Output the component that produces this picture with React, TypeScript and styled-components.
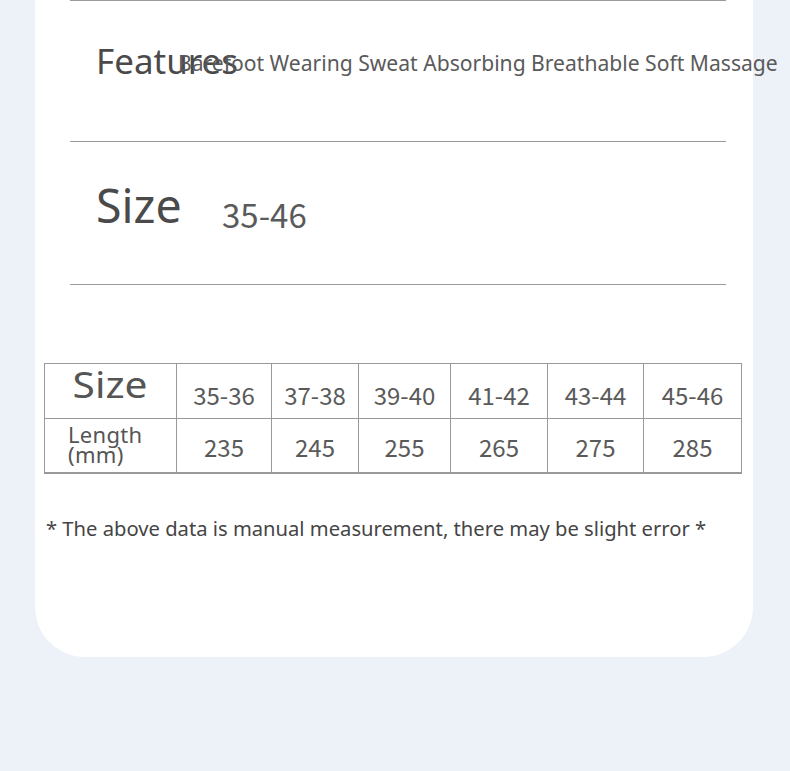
import React from "react";
import styled, { createGlobalStyle } from "styled-components";

const GlobalStyle = createGlobalStyle`
  html, body {
    margin: 0;
    padding: 0;
    background: #edf1f8;
  }
`;

const Page = styled.div`
  width: 790px;
  height: 771px;
  background: #edf1f8;
  overflow: hidden;
`;

const Card = styled.div`
  margin-left: 35px;
  width: 718px;
  height: 657px;
  background: #fff;
  border-radius: 0 0 50px 50px;
  padding: 0 0 0 35px;
  box-sizing: border-box;
  font-family: "Noto Sans", "Open Sans", sans-serif;
  color: #555;
`;

const Specs = styled.div`
  display: flex;
  flex-direction: column;
`;

const SpecRow = styled.div<{ $height: number }>`
  width: 656px;
  height: ${(p) => p.$height}px;
  border-top: 1px solid #9a9a9a;
  display: flex;
  align-items: flex-start;
  padding: 0 0 0 26px;
  box-sizing: border-box;
  &:last-of-type {
    height: ${(p) => p.$height + 1}px;
    border-bottom: 1px solid #9a9a9a;
  }
`;

const SpecLabel = styled.div<{ $width: number; $size: number; $top: number }>`
  flex: 0 0 ${(p) => p.$width}px;
  width: ${(p) => p.$width}px;
  min-width: 0;
  margin-top: ${(p) => p.$top}px;
  font-size: ${(p) => p.$size}px;
  color: #4a4a4a;
  white-space: nowrap;
  line-height: 1;
`;

const SpecValue = styled.div<{ $size: number; $top: number; $num?: boolean }>`
  margin-top: ${(p) => p.$top}px;
  font-size: ${(p) => p.$size}px;
  white-space: nowrap;
  color: #5a5a5a;
  line-height: 1;
  font-family: ${(p) =>
    p.$num ? '"Noto Sans CJK SC", sans-serif' : '"Noto Sans", sans-serif'};
`;

const SizeTable = styled.table`
  margin: 78px 0 0 -26px;
  border-collapse: collapse;
  border: 1.5px solid #999;
  border-bottom-width: 2.5px;
  font-family: "Noto Sans CJK SC", "Noto Sans", sans-serif;
  color: #5a5a5a;
`;

const Cell = styled.td<{ $w: number }>`
  width: ${(p) => p.$w}px;
  border: 1.5px solid #999;
  padding: 0;
  text-align: center;
  box-sizing: border-box;
`;

const HeadRow = styled.tr`
  height: 55px;
  td {
    font-size: 24px;
    padding-top: 6px;
  }
`;

const BodyRow = styled.tr`
  height: 54px;
  td {
    font-size: 24px;
    padding-top: 2px;
  }
`;

const LabelCell = styled(Cell)`
  && {
    vertical-align: top;
    padding-top: 3px;
  }
`;

const HeadLabel = styled.div`
  font-family: "Noto Sans", sans-serif;
  font-size: 36px;
  line-height: 36px;
  color: #555;
  transform: scaleX(1.13);
  margin-left: -1px;
`;

const LengthLabel = styled.div`
  font-family: "Noto Sans", sans-serif;
  font-size: 22px;
  line-height: 20px;
  text-align: left;
  padding: 2px 0 0 23px;
  color: #555;
  letter-spacing: 0.3px;
`;

const Note = styled.p`
  margin: 40px 0 0 -24px;
  font-size: 20.2px;
  color: #454545;
  white-space: nowrap;
`;

const widths = [132, 95, 87, 92, 97, 96, 98];
const sizes = ["35-36", "37-38", "39-40", "41-42", "43-44", "45-46"];
const lengths = ["235", "245", "255", "265", "275", "285"];

export default function App() {
  return (
    <Page>
      <GlobalStyle />
      <Card>
        <Specs>
          <SpecRow $height={141}>
            <SpecLabel $width={82} $size={35} $top={42}>Features</SpecLabel>
            <SpecValue $size={21.1} $top={51}>
              Barefoot Wearing Sweat Absorbing Breathable Soft Massage
            </SpecValue>
          </SpecRow>
          <SpecRow $height={143}>
            <SpecLabel $width={126} $size={46.5} $top={40}>Size</SpecLabel>
            <SpecValue $size={33} $top={56} $num>35-46</SpecValue>
          </SpecRow>
        </Specs>
        <SizeTable>
          <tbody>
            <HeadRow>
              <LabelCell $w={widths[0]}>
                <HeadLabel>Size</HeadLabel>
              </LabelCell>
              {sizes.map((s, i) => (
                <Cell key={s} $w={widths[i + 1]}>{s}</Cell>
              ))}
            </HeadRow>
            <BodyRow>
              <LabelCell $w={widths[0]}>
                <LengthLabel>
                  Length
                  <br />
                  (mm)
                </LengthLabel>
              </LabelCell>
              {lengths.map((l, i) => (
                <Cell key={l} $w={widths[i + 1]}>{l}</Cell>
              ))}
            </BodyRow>
          </tbody>
        </SizeTable>
        <Note>* The above data is manual measurement, there may be slight error *</Note>
      </Card>
    </Page>
  );
}
